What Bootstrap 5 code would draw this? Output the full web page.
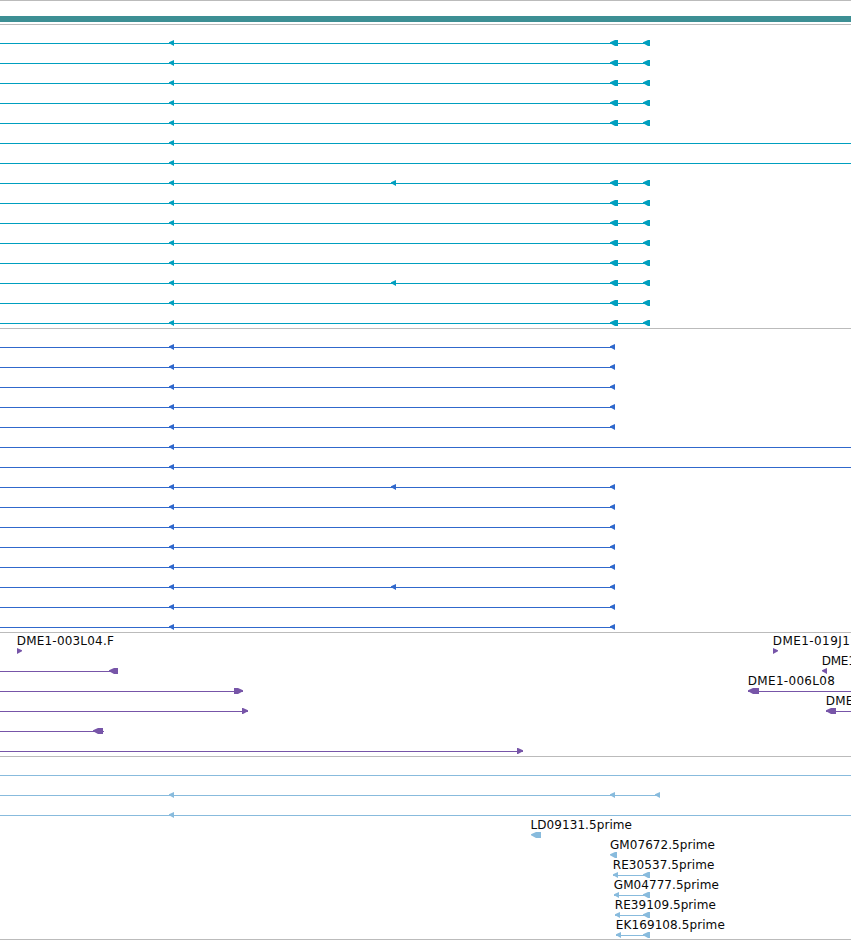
<!DOCTYPE html>
<html lang="en">
<head>
<meta charset="utf-8">
<meta name="viewport" content="width=device-width, initial-scale=1">
<title>Genome browser tracks</title>
<link href="https://cdn.jsdelivr.net/npm/bootstrap@5.3.0/dist/css/bootstrap.min.css" rel="stylesheet">
<style>
  body { font-family: "DejaVu Sans", sans-serif; font-size: 12px; color: #000; }
  .viewer { height: 940px; }
  .rule { height: 1px; background: #bbb; }
  .contig-gap { height: 15px; }
  .contig { height: 6px; margin-bottom: 2px; background: #3d8f94; }
  .track { padding-top: 2px; padding-bottom: 1px; }
  .slot { height: 20px; }
  .slot text { fill: #080808; }
  .gene { color: #009fbf; }
  .cds { color: #3068cc; }
  .bac { color: #7755a8; }
  .est { color: #88bbdd; }
</style>
<script src="https://cdn.jsdelivr.net/npm/bootstrap@5.3.0/dist/js/bootstrap.bundle.min.js"></script>
</head>
<body class="bg-white m-0">
<main class="viewer d-flex flex-column overflow-hidden">
  <div class="rule"></div>
  <div class="contig-gap"></div>
  <div class="contig"></div>
  <div class="rule"></div>
  <section class="track gene" id="gene"></section>
  <div class="rule"></div>
  <section class="track cds" id="cds"></section>
  <div class="rule"></div>
  <section class="track bac" id="bac"></section>
  <div class="rule"></div>
  <section class="track est pb-0" id="est"></section>
  <div class="rule"></div>
</main>
<script>
  // Slot: lines [from, to], left and right arrows [from, to], labels [x, text, width]
  const END = 851;
  const left = ([a, b]) => { const h = Math.min(a + 5, b); return `<path d="M${a} 15.3L${h} 13H${b}V19H${h}L${a} 16.3Z"/>`; };
  const right = ([a, b]) => { const h = Math.max(b - 5, a); return `<path d="M${b} 15.3L${h} 13H${a}V19H${h}L${b} 16.3Z"/>`; };
  const label = ([x, t, w]) => `<text x="${x}" y="10"${w ? ` textLength="${w}"` : ''}>${t}</text>`;
  function slot(s) {
    return `<div class="slot"><svg class="d-block overflow-visible" width="851" height="20" fill="currentColor">` +
      (s.lines || []).map(([a, b]) => `<rect x="${a}" y="16" width="${b - a}" height="1"/>`).join('') +
      (s.left || []).map(left).join('') + (s.right || []).map(right).join('') +
      (s.labels || []).map(label).join('') + `</svg></div>`;
  }
  const draw = (id, slots) => document.getElementById(id).innerHTML = slots.map(slot).join('');

  const transcripts = (tail, end) => Array.from({ length: 15 }, (_, i) => {
    const long = i === 5 || i === 6;
    const arrows = [[169, 174]];
    if (i === 7 || i === 12) arrows.push([391, 396]);
    if (!long) arrows.push(...tail);
    return { lines: [[0, long ? END : end]], left: arrows };
  });
  draw('gene', transcripts([[610, 618], [643, 650]], 650));
  draw('cds', transcripts([[610, 615]], 615));
  draw('bac', [
    { right: [[17, 22], [773, 778]], labels: [[16.8, 'DME1-003L04.F', 97], [772.8, 'DME1-019J1', 77]] },
    { lines: [[0, 118]], left: [[109, 118], [822, 827]], labels: [[821.8, 'DME1', 34]] },
    { lines: [[0, 243], [748, END]], right: [[234, 243]], left: [[748, 759]], labels: [[747.8, 'DME1-006L08', 87]] },
    { lines: [[0, 248], [826, END]], right: [[242, 248]], left: [[826, 836]], labels: [[825.8, 'DME', 27.5]] },
    { lines: [[0, 104]], left: [[93, 103]] },
    { lines: [[0, 523]], right: [[517, 523]] }
  ]);
  const read = (x, t, w) => ({ lines: [[x, 650]], left: [[x, x + 5], [643, 650]], labels: [[x - .2, t, w]] });
  draw('est', [
    { lines: [[0, END]] },
    { lines: [[0, 660]], left: [[169, 174], [610, 615], [655, 660]] },
    { lines: [[0, END]], left: [[169, 174]] },
    { left: [[531, 541]], labels: [[530.5, 'LD09131.5prime', 101.5]] },
    { left: [[610, 617]], labels: [[610, 'GM07672.5prime', 105]] },
    read(613, 'RE30537.5prime', 101.5),
    read(614, 'GM04777.5prime', 105),
    read(615, 'RE39109.5prime', 101),
    read(616, 'EK169108.5prime', 109)
  ]);
</script>
</body>
</html>
